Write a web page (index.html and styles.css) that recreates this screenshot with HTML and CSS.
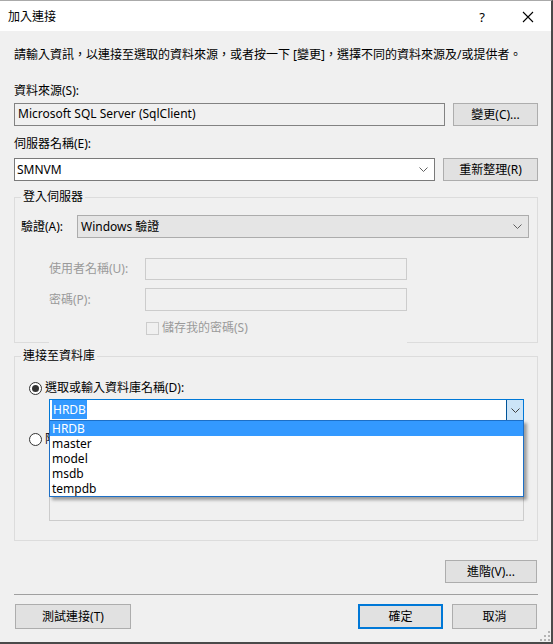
FILE: index.html
```html
<!DOCTYPE html>
<html lang="zh-Hant">
<head>
<meta charset="utf-8">
<title>加入連接</title>
<link rel="stylesheet" href="styles.css">
</head>
<body>
<div class="window">
  <div class="titlebar">
    <span class="title">加入連接</span>
    <span class="help">?</span>
    <span class="close">
      <svg width="12" height="12" viewBox="0 0 12 12"><path d="M1 1 L11 11 M11 1 L1 11" stroke="#000" stroke-width="1.1" fill="none"/></svg>
    </span>
  </div>
  <div class="content">
    <p class="intro">請輸入資訊，以連接至選取的資料來源，或者按一下 [變更]，選擇不同的資料來源及/或提供者。</p>

    <div class="lbl lbl-first">資料來源(S):</div>
    <div class="row row-first">
      <div class="textbox readonly src">Microsoft SQL Server (SqlClient)</div>
      <div class="btn btn-change">變更(C)...</div>
    </div>

    <div class="lbl">伺服器名稱(E):</div>
    <div class="row">
      <div class="combo server">
        <span class="combo-text">SMNVM</span>
        <svg class="chev" width="9" height="5" viewBox="0 0 9 5"><path d="M0.5 0.5 L4.5 4.5 L8.5 0.5" stroke="#606060" fill="none"/></svg>
      </div>
      <div class="btn btn-refresh">重新整理(R)</div>
    </div>

    <fieldset class="group group-login">
      <legend>登入伺服器</legend>
      <div class="auth-row">
        <span class="auth-lbl">驗證(A):</span>
        <div class="combo dropdown">
          <span class="combo-text">Windows 驗證</span>
          <svg class="chev" width="9" height="5" viewBox="0 0 9 5"><path d="M0.5 0.5 L4.5 4.5 L8.5 0.5" stroke="#606060" fill="none"/></svg>
        </div>
      </div>
      <div class="cred-row user-row">
        <span class="cred-lbl">使用者名稱(U):</span>
        <div class="textbox disabled cred-box"></div>
      </div>
      <div class="cred-row pass-row">
        <span class="cred-lbl">密碼(P):</span>
        <div class="textbox disabled cred-box pass-box"></div>
      </div>
      <div class="save-row">
        <span class="checkbox"></span>
        <span class="save-lbl">儲存我的密碼(S)</span>
      </div>
    </fieldset>

    <fieldset class="group group-db">
      <legend>連接至資料庫</legend>
      <div class="radio-row">
        <span class="radio checked"><span class="dot"></span></span>
        <span class="radio-lbl">選取或輸入資料庫名稱(D):</span>
      </div>
      <div class="db-combo-wrap">
        <div class="combo focused">
          <span class="combo-text"><span class="sel">HRDB</span></span>
          <span class="drop-btn">
            <svg width="9" height="5" viewBox="0 0 9 5"><path d="M0.5 0.5 L4.5 4.5 L8.5 0.5" stroke="#404040" fill="none"/></svg>
          </span>
        </div>
        <ul class="droplist">
          <li class="active">HRDB</li>
          <li>master</li>
          <li>model</li>
          <li>msdb</li>
          <li>tempdb</li>
        </ul>
      </div>
      <div class="radio-row radio-row2">
        <span class="radio"></span>
        <span class="radio-lbl">附加資料庫檔案(H):</span>
      </div>
      <div class="file-box"></div>
    </fieldset>

    <div class="adv-row">
      <div class="btn btn-adv">進階(V)...</div>
    </div>
    <div class="separator"></div>
    <div class="footer">
      <div class="btn btn-test">測試連接(T)</div>
      <div class="footer-right">
        <div class="btn btn-ok">確定</div>
        <div class="btn btn-cancel">取消</div>
      </div>
    </div>
  </div>
  <svg class="grip" width="10" height="10" viewBox="0 0 10 10">
    <rect x="8" y="0" width="2" height="2" fill="#b4b4b4"/>
    <rect x="4" y="4" width="2" height="2" fill="#b4b4b4"/>
    <rect x="8" y="4" width="2" height="2" fill="#b4b4b4"/>
    <rect x="0" y="8" width="2" height="2" fill="#b4b4b4"/>
    <rect x="4" y="8" width="2" height="2" fill="#b4b4b4"/>
    <rect x="8" y="8" width="2" height="2" fill="#b4b4b4"/>
  </svg>
</div>
</body>
</html>
```

FILE: styles.css
```css
* { box-sizing: border-box; }

html, body {
  margin: 0;
  padding: 0;
  background: #f0f0f0;
}

body {
  font-family: "Noto Sans", "Noto Sans CJK TC", sans-serif;
  font-size: 12px;
  line-height: 16px;
  color: #000;
}

.window {
  position: relative;
  width: 553px;
  height: 644px;
  background: #f0f0f0;
  border-top: 1px solid #aaaaaa;
  border-right: 2px solid #4a4a4a;
  border-bottom: 2px solid #4a4a4a;
  overflow: hidden;
}

.titlebar {
  height: 30px;
  background: #fff;
  display: flex;
  align-items: center;
  padding-left: 8px;
  padding-top: 1px;
}

.title { flex: 1; }

.help {
  width: 46px;
  text-align: center;
  font-size: 13px;
  margin-left: 6px;
}

.close {
  width: 46px;
  display: flex;
  justify-content: center;
  align-items: center;
}

.content {
  padding: 0 13px 0 14px;
}

.intro {
  margin: 16px 0 0;
  white-space: nowrap;
}

.lbl { margin-top: 10px; }
.lbl-first { margin-top: 20px; }

.row {
  display: flex;
  gap: 8px;
  margin-top: 6px;
  height: 23px;
}

.row-first { margin-top: 4px; }

.textbox {
  height: 23px;
  border: 1px solid #7a7a7a;
  background: #fff;
  padding: 2px 3px;
}

.textbox.readonly {
  background: #f0f0f0;
  border-color: #828282;
}

.textbox.disabled {
  background: #f0f0f0;
  border-color: #cccccc;
}

.src { width: 431px; }

.btn {
  height: 23px;
  background: #e1e1e1;
  border: 1px solid #adadad;
  display: flex;
  align-items: center;
  justify-content: center;
}

.btn-change { width: 85px; }
.btn-refresh { width: 95px; }

.combo {
  height: 23px;
  border: 1px solid #7a7a7a;
  background: #fff;
  display: flex;
  align-items: center;
  padding: 0 6px 0 2px;
}

.combo-text { flex: 1; white-space: nowrap; }

.server { width: 421px; }

.group {
  margin: 8px 0 0;
  border: 1px solid #dcdcdc;
  padding: 0 8px 0 6px;
  min-width: 0;
}

.group legend {
  padding: 0 2px;
  margin: 0;
  line-height: 16px;
}

.auth-row {
  display: flex;
  align-items: center;
  margin-top: 10px;
}

.auth-lbl { width: 56px; }

.dropdown {
  flex: 1;
  background: #e5e5e5;
  border-color: #acacac;
  padding-left: 3px;
  padding-right: 6px;
}

.cred-row {
  display: flex;
  align-items: center;
  padding-left: 28px;
  color: #9a9a9a;
}

.user-row { margin-top: 20px; }
.pass-row { margin-top: 8px; }

.cred-lbl { width: 96px; }

.cred-box { width: 262px; height: 22px; }
.pass-box { height: 23px; }

.save-row {
  margin: 7px 0 -6px 28px;
  width: 358px;
  height: 30px;
  padding: 3px 0 0 96px;
  display: flex;
  align-items: flex-start;
  background: #f0f0f0;
  color: #9a9a9a;
}

.checkbox {
  width: 13px;
  height: 13px;
  border: 1px solid #cccccc;
  background: #f0f0f0;
  margin: 1px 3px 0 1px;
}

.save-lbl { line-height: 16px; margin-top: -1px; }

.group-db {
  margin-top: 5px;
  padding-bottom: 19px;
}

.radio-row {
  display: flex;
  align-items: center;
  margin-top: 17px;
  padding-left: 8px;
  height: 14px;
}

.radio-row2 { margin-top: 11px; }

.radio {
  width: 13px;
  height: 13px;
  border-radius: 50%;
  border: 1px solid #333;
  background: #fff;
  display: flex;
  align-items: center;
  justify-content: center;
  margin-right: 3px;
}

.radio .dot {
  width: 7px;
  height: 7px;
  border-radius: 50%;
  background: #333;
}

.db-combo-wrap {
  position: relative;
  margin: 4px 5px 0 28px;
}

.focused {
  height: 22px;
  border-color: #0078d7;
  padding: 0 0 0 2px;
}

.sel {
  background: #3399ff;
  color: #fff;
  padding: 1px 1px;
}

.drop-btn {
  width: 17px;
  height: 20px;
  background: #cce4f7;
  border-left: 1px solid #005499;
  display: flex;
  align-items: center;
  justify-content: center;
}

.droplist {
  position: absolute;
  left: 0;
  right: 0;
  top: 21px;
  margin: 0;
  padding: 0;
  list-style: none;
  background: #fff;
  border: 1px solid #1d6fc6;
  box-shadow: 3px 3px 3px rgba(0, 0, 0, 0.35);
  z-index: 5;
}

.droplist li {
  height: 15px;
  line-height: 15px;
  padding-left: 2px;
}

.droplist li.active {
  background: #3399ff;
  color: #fff;
}

.file-box {
  margin: 9px 5px 0 28px;
  height: 66px;
  border: 1px solid #cccccc;
  background: #f0f0f0;
}

.adv-row {
  display: flex;
  justify-content: flex-end;
  margin-top: 19px;
  padding-right: 1px;
}

.btn-adv { width: 92px; }

.separator {
  margin-top: 11px;
  height: 1px;
  background: #a0a0a0;
}

.footer {
  display: flex;
  justify-content: space-between;
  margin-top: 9px;
  padding: 0 1px;
}

.footer .btn { height: 25px; }

.footer-right {
  display: flex;
  gap: 9px;
}

.btn-test { width: 116px; }
.btn-ok {
  width: 85px;
  border: 2px solid #0078d7;
}
.btn-cancel { width: 85px; }

.grip {
  position: absolute;
  right: 1px;
  bottom: 1px;
}
```
